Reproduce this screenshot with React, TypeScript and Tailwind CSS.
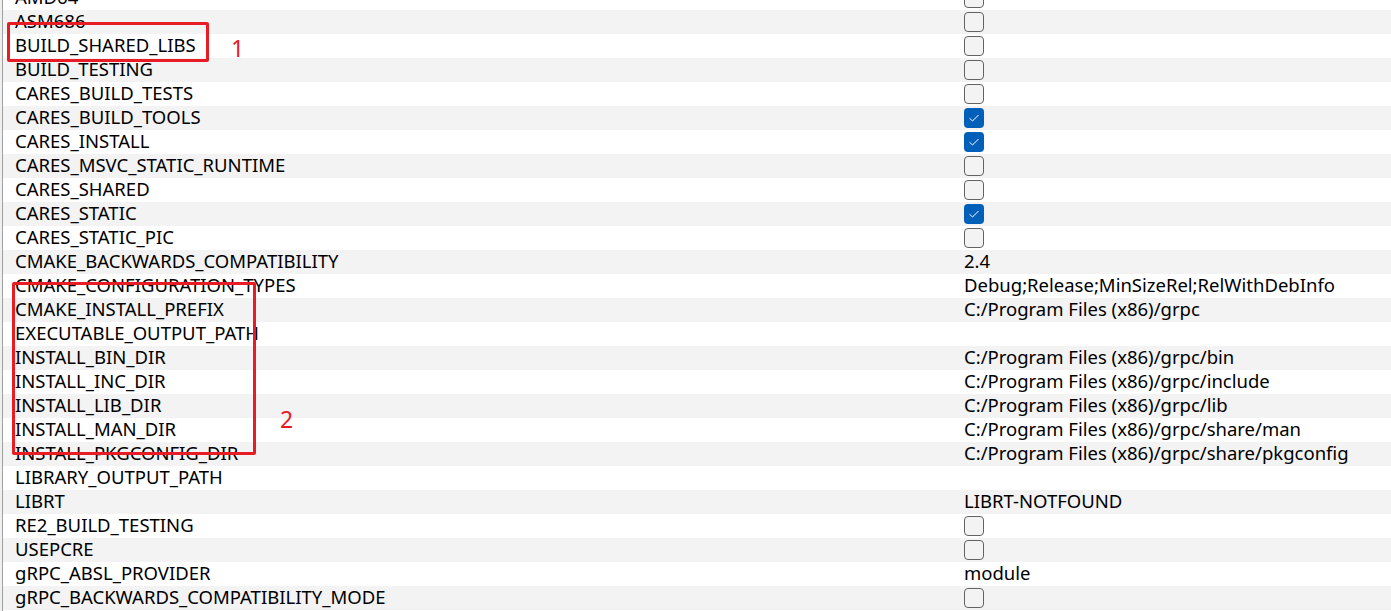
import { FC } from 'react';

type Row = { name: string; value?: string; check?: boolean };

const rows: Row[] = [
    { name: 'AMD64', check: false },
    { name: 'ASM686', check: false },
    { name: 'BUILD_SHARED_LIBS', check: false },
    { name: 'BUILD_TESTING', check: false },
    { name: 'CARES_BUILD_TESTS', check: false },
    { name: 'CARES_BUILD_TOOLS', check: true },
    { name: 'CARES_INSTALL', check: true },
    { name: 'CARES_MSVC_STATIC_RUNTIME', check: false },
    { name: 'CARES_SHARED', check: false },
    { name: 'CARES_STATIC', check: true },
    { name: 'CARES_STATIC_PIC', check: false },
    { name: 'CMAKE_BACKWARDS_COMPATIBILITY', value: '2.4' },
    { name: 'CMAKE_CONFIGURATION_TYPES', value: 'Debug;Release;MinSizeRel;RelWithDebInfo' },
    { name: 'CMAKE_INSTALL_PREFIX', value: 'C:/Program Files (x86)/grpc' },
    { name: 'EXECUTABLE_OUTPUT_PATH', value: '' },
    { name: 'INSTALL_BIN_DIR', value: 'C:/Program Files (x86)/grpc/bin' },
    { name: 'INSTALL_INC_DIR', value: 'C:/Program Files (x86)/grpc/include' },
    { name: 'INSTALL_LIB_DIR', value: 'C:/Program Files (x86)/grpc/lib' },
    { name: 'INSTALL_MAN_DIR', value: 'C:/Program Files (x86)/grpc/share/man' },
    { name: 'INSTALL_PKGCONFIG_DIR', value: 'C:/Program Files (x86)/grpc/share/pkgconfig' },
    { name: 'LIBRARY_OUTPUT_PATH', value: '' },
    { name: 'LIBRT', value: 'LIBRT-NOTFOUND' },
    { name: 'RE2_BUILD_TESTING', check: false },
    { name: 'USEPCRE', check: false },
    { name: 'gRPC_ABSL_PROVIDER', value: 'module' },
    { name: 'gRPC_BACKWARDS_COMPATIBILITY_MODE', check: false },
];

const CheckBox: FC<{ checked: boolean }> = ({ checked }) =>
    checked ? (
        <span className="w-5 h-5 rounded-[4px] bg-[#005fb8] flex items-center justify-center">
            <svg width="12" height="10" viewBox="0 0 12 10">
                <path d="M1.5 5.2 L4.5 8 L10.5 2" fill="none" stroke="#fff" strokeWidth="1" />
            </svg>
        </span>
    ) : (
        <span className="w-5 h-5 rounded-[4px] bg-[#f3f3f3] border border-[#636363]" />
    );

export default function App() {
    return (
        <div
            className="relative w-[1391px] h-[611px] overflow-hidden bg-white flex text-black"
            style={{ fontFamily: '"Noto Sans", "Open Sans", sans-serif' }}
        >
            <div className="w-[2px] bg-[#f0f0f0]" />
            <div className="w-px bg-[#a0a0a0]" />
            <div className="flex-1 flex flex-col -mt-[14px]">
                {rows.map((r, i) => (
                    <div
                        key={r.name}
                        className={`h-6 shrink-0 flex items-center text-[18.5px] leading-none ${i % 2 ? 'bg-[#f3f3f3]' : 'bg-white'}`}
                    >
                        <div className="w-[961px] pl-3 pb-[1px] whitespace-nowrap">{r.name}</div>
                        <div className="flex-1 flex items-center pb-[1px] whitespace-nowrap">
                            {r.check !== undefined ? <CheckBox checked={r.check} /> : r.value}
                        </div>
                    </div>
                ))}
            </div>

            {/* annotation overlays */}
            <div className="absolute left-[7px] top-[22px] w-[202px] h-[40px] border-[3px] border-[#e81c24] rounded-[2px]" />
            <div className="absolute left-[231px] top-[37px] text-[#e81c24] text-[23px] leading-none">1</div>
            <div className="absolute left-[12px] top-[282px] w-[244px] h-[173px] border-[3px] border-[#e81c24] rounded-[2px]" />
            <div className="absolute left-[280px] top-[408px] text-[#e81c24] text-[23px] leading-none">2</div>
        </div>
    );
}
